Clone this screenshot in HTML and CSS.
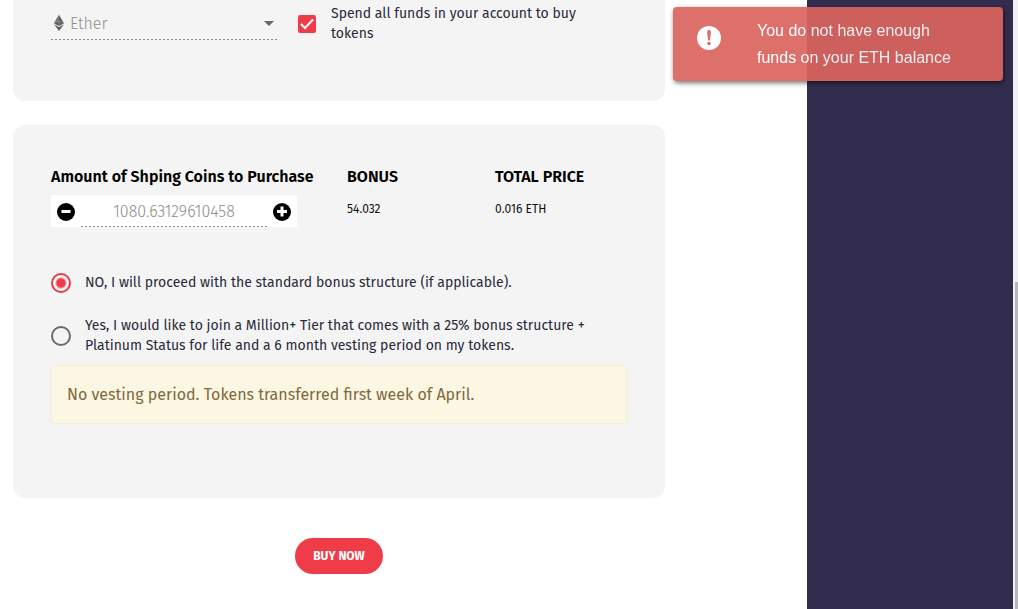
FILE: index.html
```html
<!DOCTYPE html>
<html lang="en">
<head>
<meta charset="utf-8">
<meta name="viewport" content="width=device-width, initial-scale=1">
<title>Buy Shping Coins</title>
<link rel="stylesheet" href="styles.css">
</head>
<body>
<div class="page">
  <main class="main">
    <form class="form">
      <section class="card card-currency">
        <div class="currency">
          <svg class="ether-icon" viewBox="0 0 10 16" aria-hidden="true">
            <path fill="#5c5c5c" d="M5 0 0 8.200 5 11.200 10 8.200z"/>
            <path fill="#757575" d="M5 0 0 8.200 5 6z"/>
            <path fill="#5c5c5c" d="M0 9.300 5 16 10 9.300 5 12.300z"/>
            <path fill="none" stroke="#b5b5b5" stroke-width=".5" d="M0 8.200 5 6l5 2.200M5 6v5.200"/>
          </svg>
          <select class="currency-select" aria-label="Currency">
            <option>Ether</option>
          </select>
          <svg class="caret" viewBox="0 0 10 5" aria-hidden="true"><path fill="#666" d="M0 0h10L5 5z"/></svg>
        </div>
        <label class="choice choice-spend">
          <input class="checkbox" type="checkbox" checked>
          <svg class="tick" viewBox="0 0 18 18" aria-hidden="true"><path fill="none" stroke="#fff" stroke-width="2" d="M3 9l4 4 8-8.500"/></svg>
          <span>Spend all funds in your account to buy tokens</span>
        </label>
      </section>

      <section class="card card-purchase">
        <div class="summary">
          <div class="summary-amount">
            <label class="heading" for="amount">Amount of Shping Coins to Purchase</label>
            <div class="stepper">
              <button class="step" type="button" aria-label="Decrease">
                <svg viewBox="0 0 18 18" aria-hidden="true"><circle cx="9" cy="9" r="9"/><path stroke="#fff" stroke-width="3" d="M4.500 8.500h9"/></svg>
              </button>
              <input class="amount" id="amount" type="text" value="1080.63129610458">
              <button class="step" type="button" aria-label="Increase">
                <svg viewBox="0 0 18 18" aria-hidden="true"><circle cx="9" cy="9" r="9"/><path stroke="#fff" stroke-width="3" d="M4 8.500h10M9 3.500v10"/></svg>
              </button>
            </div>
          </div>
          <div>
            <div class="heading">BONUS</div>
            <div class="figure">54.032</div>
          </div>
          <div>
            <div class="heading">TOTAL PRICE</div>
            <div class="figure">0.016 ETH</div>
          </div>
        </div>

        <div class="options">
          <label class="choice">
            <input class="radio" type="radio" name="tier" checked>
            <span>NO, I will proceed with the standard bonus structure (if applicable).</span>
          </label>
          <label class="choice">
            <input class="radio" type="radio" name="tier">
            <span>Yes, I would like to join a Million+ Tier that comes with a 25% bonus structure + Platinum Status for life and a 6 month vesting period on my tokens.</span>
          </label>
        </div>

        <p class="notice">No vesting period. Tokens transferred first week of April.</p>
      </section>

      <button class="buy" type="button">BUY NOW</button>
    </form>
  </main>
  <aside class="sidebar"></aside>
  <div class="track"><div class="thumb"></div></div>
</div>

<div class="toast" role="alert">
  <svg class="toast-icon" viewBox="0 0 24 24" aria-hidden="true">
    <circle cx="12" cy="12" r="12" fill="#fff"/>
    <path fill="#db645f" d="M10 5.500Q10 4 12 4t2 1.500L13 14.500h-2z"/>
    <circle cx="12" cy="17.500" r="1.800" fill="#db645f"/>
  </svg>
  <p class="toast-text">You do not have enough funds on your ETH balance</p>
</div>
</body>
</html>
```
FILE: styles.css
```css
* {
  box-sizing: border-box;
}

body {
  margin: 0;
  background: #fff;
  color: #2a2a3a;
  font-family: "Fira Sans", "Noto Sans", sans-serif;
  font-size: 14px;
  line-height: 20px;
}

button,
input,
select {
  margin: 0;
  font-family: inherit;
}

.page {
  display: flex;
  min-height: 100vh;
}

.main {
  flex: 1;
  padding: 0 142px 24px 13px;
}

.form {
  display: flex;
  flex-direction: column;
}

.sidebar {
  width: 206px;
  background: #322d4e;
}

.track {
  display: flex;
  width: 5px;
  padding: 282px 0 0 2px;
  background: #f1f1f1;
}

.thumb {
  flex: 1;
  background: #b8b8b8;
}

.card {
  background: #f4f4f4;
}

.card-currency {
  display: grid;
  grid-template-columns: 227px 1fr;
  gap: 20px;
  align-items: start;
  padding: 4px 38px 57px;
  border-radius: 0 0 12px 12px;
}

.currency {
  display: grid;
  grid-template-columns: 16px 1fr 10px;
  align-items: center;
  height: 36px;
  padding: 2px 4px 0 3px;
}

.currency,
.amount {
  background: repeating-linear-gradient(to right, #8c8c8c 0 2px, transparent 2px 4px) bottom / 100% 1px no-repeat;
}

.ether-icon {
  width: 10px;
  height: 16px;
}

.currency-select {
  grid-row: 1;
  grid-column: 2 / 4;
  padding: 0;
  border: 0;
  background: none;
  color: #8c8c8c;
  font-size: 16px;
  font-weight: 300;
  appearance: none;
}

.caret {
  grid-row: 1;
  grid-column: 3;
  width: 10px;
  height: 5px;
  pointer-events: none;
}

.choice {
  display: grid;
  grid-template-columns: 20px 1fr;
  gap: 14px;
  align-items: center;
}

.choice-spend {
  grid-template-columns: 18px 1fr;
  gap: 15px;
  max-width: 300px;
}

.checkbox,
.tick {
  grid-row: 1;
  grid-column: 1;
  width: 18px;
  height: 18px;
}

.checkbox {
  appearance: none;
  border-radius: 2px;
  background: #ee3d48;
}

.tick {
  pointer-events: none;
}

.card-purchase {
  margin-top: 24px;
  padding: 40px 38px 74px;
  border-radius: 12px;
}

.summary {
  display: grid;
  grid-template-columns: repeat(4, 1fr);
  gap: 16px;
}

.summary-amount {
  grid-column: span 2;
}

.heading {
  display: block;
  color: #000;
  font-size: 16px;
  font-weight: 600;
  line-height: 24px;
  white-space: nowrap;
}

.figure {
  margin-top: 10px;
  font-size: 12px;
  color: #111;
}

.stepper {
  display: flex;
  width: 246px;
  height: 32px;
  margin-top: 6px;
  background: #fff;
}

.step {
  display: flex;
  align-items: center;
  justify-content: center;
  width: 30px;
  padding: 2px 0 0;
  border: 0;
  background: none;
}

.step svg {
  width: 18px;
  height: 18px;
}

.amount {
  flex: 1;
  min-width: 0;
  padding: 0;
  border: 0;
  color: #8c8c8c;
  font-size: 16px;
  font-weight: 300;
  text-align: center;
}

.options {
  display: grid;
  gap: 23px;
  margin-top: 46px;
}

.radio {
  width: 20px;
  height: 20px;
  border: 2px solid #6b6b6b;
  border-radius: 50%;
  appearance: none;
}

.radio:checked {
  border-color: #e23d4a;
  background: radial-gradient(circle, #ee3d48 4px, transparent 6px);
}

.notice {
  margin: 9px 0 0;
  padding: 18px 15px;
  border: 1px solid #f8edd0;
  border-radius: 4px;
  background: #fcf7e2;
  color: #80693f;
  font-size: 16px;
  line-height: 21px;
}

.buy {
  align-self: center;
  height: 36px;
  margin-top: 40px;
  padding: 0 18px;
  border: 0;
  border-radius: 18px;
  background: #f03c49;
  color: #fff;
  font-size: 12px;
  font-weight: 700;
}

.toast {
  position: fixed;
  top: 7px;
  right: 15px;
  display: flex;
  gap: 36px;
  width: 330px;
  padding: 10px 40px 10px 24px;
  border-radius: 4px;
  background: #db645f;
  box-shadow: 1px 2px 5px rgba(0, 0, 0, 0.6);
  opacity: 0.92;
}

.toast-icon {
  flex: none;
  width: 24px;
  height: 24px;
  margin-top: 9px;
}

.toast-text {
  margin: 0;
  color: #fff;
  font-family: "Liberation Sans", Arial, sans-serif;
  font-size: 16px;
  line-height: 27px;
}
```
